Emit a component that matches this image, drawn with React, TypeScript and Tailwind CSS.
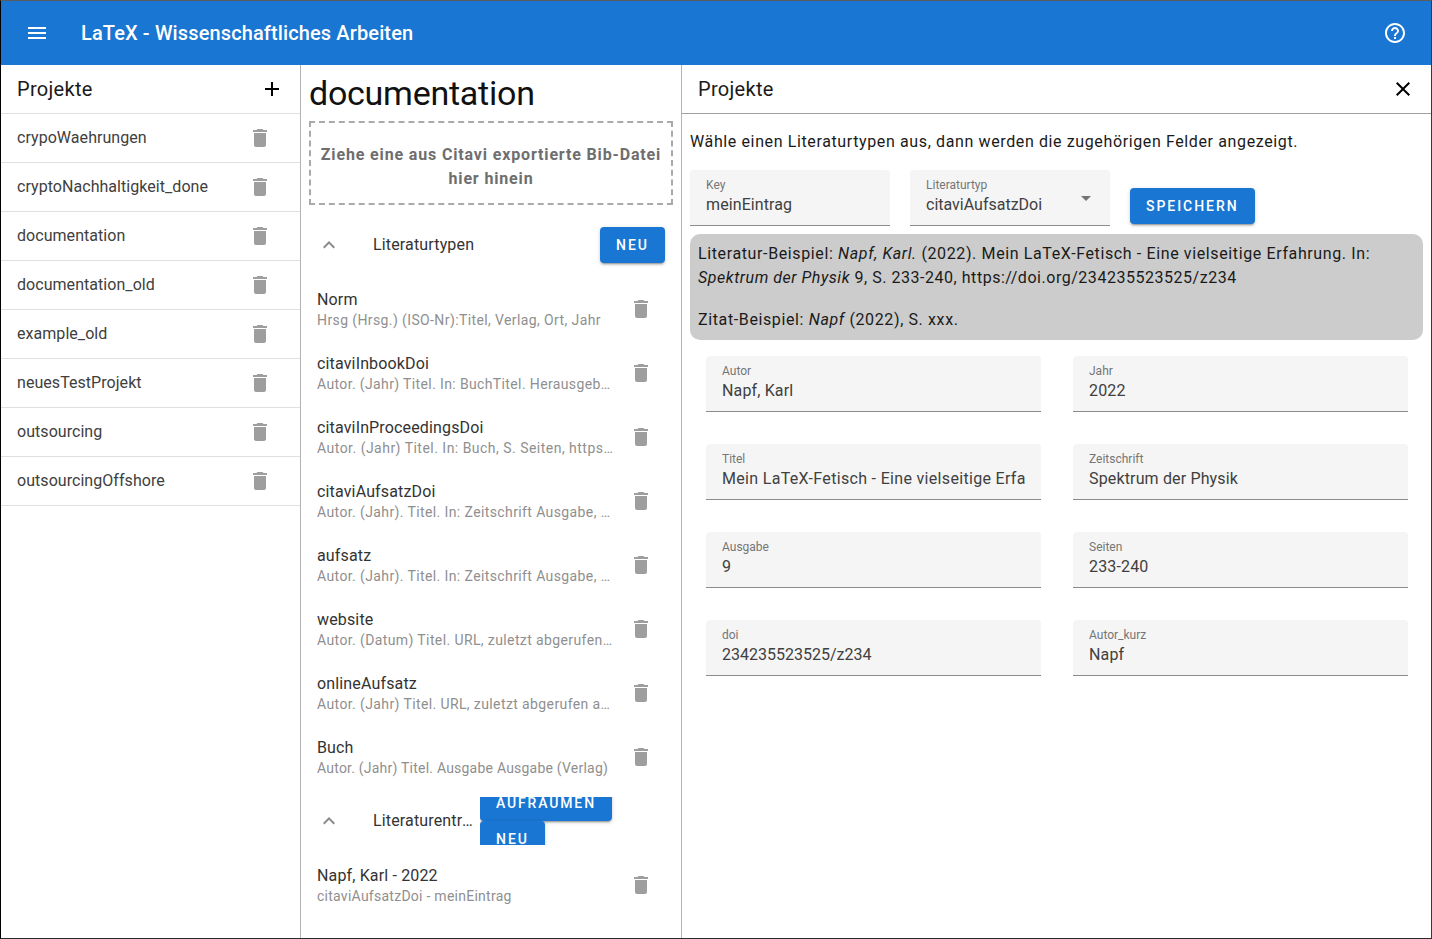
import React from "react";

const P = {
  menu: "M3 18h18v-2H3v2zm0-5h18v-2H3v2zm0-7v2h18V6H3z",
  add: "M19 13h-6v6h-2v-6H5v-2h6V5h2v6h6v2z",
  del: "M6 19c0 1.1.9 2 2 2h8c1.1 0 2-.9 2-2V7H6v12zM19 4h-3.5l-1-1h-5l-1 1H5v2h14V4z",
  close: "M19 6.41L17.59 5 12 10.59 6.41 5 5 6.41 10.59 12 5 17.59 6.41 19 12 13.41 17.59 19 19 17.59 13.41 12z",
  help: "M11 18h2v-2h-2v2zm1-16C6.48 2 2 6.48 2 12s4.48 10 10 10 10-4.48 10-10S17.52 2 12 2zm0 18c-4.41 0-8-3.59-8-8s3.59-8 8-8 8 3.59 8 8-3.59 8-8 8zm0-14c-2.21 0-4 1.79-4 4h2c0-1.1.9-2 2-2s2 .9 2 2c0 2-3 1.75-3 5h2c0-2.25 3-2.5 3-5 0-2.21-1.79-4-4-4z",
  less: "M12 8l-6 6 1.41 1.41L12 10.83l4.59 4.58L18 14z",
  drop: "M7 10l5 5 5-5z",
};

function Icon({ d, className }: { d: string; className?: string }) {
  return (
    <svg viewBox="0 0 24 24" className={"w-6 h-6 shrink-0 fill-current " + (className ?? "")}>
      <path d={d} />
    </svg>
  );
}

const projects = [
  "crypoWaehrungen",
  "cryptoNachhaltigkeit_done",
  "documentation",
  "documentation_old",
  "example_old",
  "neuesTestProjekt",
  "outsourcing",
  "outsourcingOffshore",
];

const types = [
  ["Norm", "Hrsg (Hrsg.) (ISO-Nr):Titel, Verlag, Ort, Jahr", "tracking-[0.39px]"],
  ["citaviInbookDoi", "Autor. (Jahr) Titel. In: BuchTitel. Herausgeber, Verlag, Seiten", "tracking-[0.37px]"],
  ["citaviInProceedingsDoi", "Autor. (Jahr) Titel. In: Buch, S. Seiten, https://doi.org/doi", "tracking-[0.48px]"],
  ["citaviAufsatzDoi", "Autor. (Jahr). Titel. In: Zeitschrift Ausgabe, S. Seiten, doi", "tracking-[0.39px]"],
  ["aufsatz", "Autor. (Jahr). Titel. In: Zeitschrift Ausgabe, S. Seiten", "tracking-[0.39px]"],
  ["website", "Autor. (Datum) Titel. URL, zuletzt abgerufen am Datum", "tracking-[0.39px]"],
  ["onlineAufsatz", "Autor. (Jahr) Titel. URL, zuletzt abgerufen am Datum", "tracking-[0.39px]"],
  ["Buch", "Autor. (Jahr) Titel. Ausgabe Ausgabe (Verlag)", "tracking-[0.22px]"],
];

const fields = [
  ["Autor", "Napf, Karl", "tracking-[0.15px]"],
  ["Jahr", "2022", "tracking-[0.15px]"],
  ["Titel", "Mein LaTeX-Fetisch - Eine vielseitige Erfahrung", "tracking-[0.32px]"],
  ["Zeitschrift", "Spektrum der Physik", "tracking-[0.15px]"],
  ["Ausgabe", "9", "tracking-[0.15px]"],
  ["Seiten", "233-240", "tracking-[0.15px]"],
  ["doi", "234235523525/z234", "tracking-[0px]"],
  ["Autor_kurz", "Napf", "tracking-[0.15px]"],
];

function Field({ label, value, right, track }: { label: string; value: string; right?: boolean; track?: string }) {
  return (
    <div className="relative h-14 bg-[#f5f5f5] rounded-t border-b border-[#8c8c8c] px-4 pt-2 overflow-hidden">
      <div className="text-xs leading-[15px] text-[#757575] whitespace-nowrap">{label}</div>
      <div className={"text-base leading-[23px] text-[#404040] whitespace-nowrap overflow-hidden " + (track ?? "tracking-[0.1px]") + (right ? " pr-6" : "")}>
        {value}
      </div>
      {right && <Icon d={P.drop} className="absolute right-3 top-4 text-[#757575]" />}
    </div>
  );
}

function Btn({ children, className }: { children: React.ReactNode; className?: string }) {
  return (
    <div
      className={
        "h-9 px-4 shrink-0 flex items-center justify-center rounded bg-[#1976d2] text-white text-sm font-medium uppercase shadow-[0_3px_1px_-2px_rgba(0,0,0,0.2),0_2px_2px_0_rgba(0,0,0,0.14),0_1px_5px_0_rgba(0,0,0,0.12)] " +
        (className ?? "")
      }
    >
      {children}
    </div>
  );
}

function ListRow({ a, b, track }: { a: string; b: string; track: string }) {
  return (
    <div className="h-16 pl-4 pr-1 flex items-center">
      <div className="w-[296px] min-w-0">
        <div className="text-base leading-6 tracking-[0.15px] text-[#333333] truncate">{a}</div>
        <div className={"-mt-[2px] text-sm leading-5 text-[#8f8f8f] truncate " + track}>{b}</div>
      </div>
      <div className="flex-1 flex justify-end pr-4">
        <Icon d={P.del} className="text-[#9e9e9e]" />
      </div>
    </div>
  );
}

function SectionHead({ title, children }: { title: string; children: React.ReactNode }) {
  return (
    <div className="h-16 py-2 pl-4 pr-2 flex items-center">
      <Icon d={P.less} className="text-[#8a8a8a] mr-8" />
      <div className="flex-1 min-w-0 text-base tracking-[0.15px] text-[#333333] truncate">{title}</div>
      {children}
    </div>
  );
}

export default function App() {
  return (
    <div
      className="relative h-[939px] w-[1432px] overflow-hidden bg-white flex flex-col border-t border-t-[#5c5c5c] border-l border-l-black border-b border-b-[#2a2a30] border-r border-r-[#333b40]"
      style={{ fontFamily: "Roboto, sans-serif" }}
    >
      <header className="h-16 shrink-0 bg-[#1976d2] text-white flex items-center pl-6 pr-6">
        <Icon d={P.menu} />
        <div className="ml-8 text-xl font-medium leading-8 tracking-[0.12px]">LaTeX - Wissenschaftliches Arbeiten</div>
        <div className="flex-1" />
        <Icon d={P.help} />
      </header>
      <div className="flex-1 min-h-0 flex">
        <aside className="w-[300px] shrink-0 border-r border-[#b4b4b4]">
          <div className="h-[49px] pl-4 pr-4 border-b border-[#e0e0e0] flex items-center justify-between">
            <div className="text-xl leading-8 tracking-[0.3px] text-[#1a1a1a]">Projekte</div>
            <Icon d={P.add} className="text-black" />
          </div>
          {projects.map((p) => (
            <div key={p} className="h-[49px] pl-4 pr-7 border-b border-[#e0e0e0] flex items-center justify-between">
              <div className="text-base tracking-[0.05px] text-[#404040]">{p}</div>
              <Icon d={P.del} className="text-[#9e9e9e]" />
            </div>
          ))}
        </aside>
        <main className="w-[381px] shrink-0 border-r border-[#b4b4b4] px-2 overflow-hidden">
          <h1 className="h-14 text-[34px] leading-[57px] tracking-[-0.25px] font-normal text-[#111111]">documentation</h1>
          <div className="h-[84px] pt-2 border-2 border-dashed border-[#aaaaaa] flex items-center justify-center text-center text-base font-bold leading-6 tracking-[0.85px] text-[#6e6e6e] px-2">
            Ziehe eine aus Citavi exportierte Bib-Datei hier hinein
          </div>
          <div className="mt-2 -mx-2 pr-2">
            <SectionHead title="Literaturtypen">
              <Btn className="tracking-[2px]">Neu</Btn>
            </SectionHead>
            {types.map(([a, b, t]) => (
              <ListRow key={a} a={a} b={b} track={t} />
            ))}
            <SectionHead title="Literaturentrag">
              <div className="w-[132px] h-12 overflow-visible flex flex-col justify-center items-start mr-[53px] ml-1 shrink-0 [clip-path:inset(0_-6px_0_0)]">
                <Btn className="tracking-[1.85px]">Aufraumen</Btn>
                <Btn className="tracking-[2px]">Neu</Btn>
              </div>
            </SectionHead>
            <ListRow a="Napf, Karl - 2022" b="citaviAufsatzDoi - meinEintrag" track="tracking-[0.26px]" />
          </div>
        </main>
        <section className="flex-1 min-w-0">
          <div className="h-[49px] pl-4 pr-4 border-b border-[#a0a0a0] flex items-center justify-between">
            <div className="text-xl leading-8 tracking-[0.3px] text-[#1a1a1a]">Projekte</div>
            <Icon d={P.close} className="text-black" />
          </div>
          <div className="pl-2 pr-2">
            <p className="mt-4 text-base leading-6 tracking-[0.62px] text-[#1a1a1a]">
              Wähle einen Literaturtypen aus, dann werden die zugehörigen Felder angezeigt.
            </p>
            <div className="mt-4 flex items-start gap-5">
              <div className="w-[200px]"><Field label="Key" value="meinEintrag" /></div>
              <div className="w-[200px]"><Field label="Literaturtyp" value="citaviAufsatzDoi" right track="tracking-[0px]" /></div>
              <Btn className="mt-[18px] tracking-[1.95px]">Speichern</Btn>
            </div>
            <div className="mt-2 h-[106px] rounded-[10px] bg-[#cccccc] p-2 text-base leading-6 tracking-[0.62px] text-[#1a1a1a]">
              <div>
                Literatur-Beispiel: <i>Napf, Karl.</i> (2022). Mein LaTeX-Fetisch - Eine vielseitige Erfahrung. In:{" "}
                <span className="tracking-[0.53px]"><i>Spektrum der Physik</i> 9, S. 233-240, https://doi.org/234235523525/z234</span>
              </div>
              <div className="mt-[18px]">
                Zitat-Beispiel: <i>Napf</i> (2022), S. xxx.
              </div>
            </div>
            <div className="mt-4 ml-4 grid grid-cols-[335px_335px] gap-8">
              {fields.map(([l, v, t]) => (
                <Field key={l} label={l} value={v} track={t} />
              ))}
            </div>
          </div>
        </section>
      </div>
      <div className="absolute -left-px bottom-0 h-[25px] w-px bg-[#777777]" />
    </div>
  );
}
